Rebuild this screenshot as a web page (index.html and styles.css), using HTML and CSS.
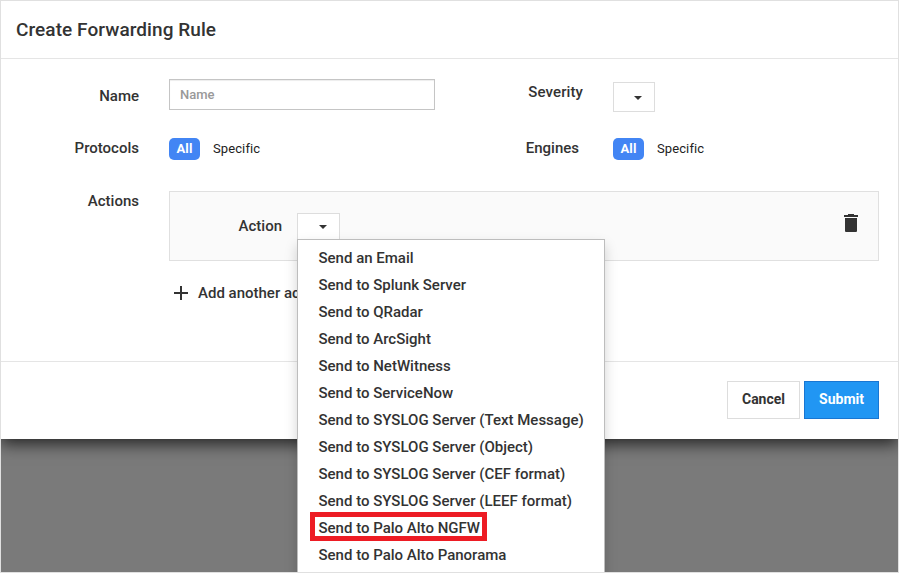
FILE: index.html
```html
<!DOCTYPE html>
<html lang="en">
<head>
<meta charset="utf-8">
<title>Create Forwarding Rule</title>
<link rel="stylesheet" href="styles.css">
</head>
<body>
<div class="page">
  <section class="modal">
    <header class="modal-header"><h1>Create Forwarding Rule</h1></header>
    <form class="modal-body">
      <div class="row row-name">
        <label class="label name-label" for="name">Name</label>
        <input class="input" id="name" type="text" placeholder="Name">
        <span class="label severity-label">Severity</span>
        <button class="select" type="button" aria-label="Severity"><span class="caret"></span></button>
      </div>
      <div class="row row-scope">
        <span class="label">Protocols</span>
        <div class="toggle"><span class="pill">All</span><span>Specific</span></div>
        <span class="label engines-label">Engines</span>
        <div class="toggle"><span class="pill">All</span><span>Specific</span></div>
      </div>
      <div class="row-actions">
        <span class="label actions-label">Actions</span>
        <div class="panel">
          <span class="label action-label">Action</span>
          <div class="dropdown">
            <button class="select" type="button" aria-label="Action"><span class="caret"></span></button>
            <ul class="menu">
              <li>Send an Email</li>
              <li>Send to Splunk Server</li>
              <li>Send to QRadar</li>
              <li>Send to ArcSight</li>
              <li>Send to NetWitness</li>
              <li>Send to ServiceNow</li>
              <li>Send to SYSLOG Server (Text Message)</li>
              <li>Send to SYSLOG Server (Object)</li>
              <li>Send to SYSLOG Server (CEF format)</li>
              <li>Send to SYSLOG Server (LEEF format)</li>
              <li class="marked">Send to Palo Alto NGFW</li>
              <li>Send to Palo Alto Panorama</li>
            </ul>
          </div>
          <svg class="trash" width="14" height="18" viewBox="0 0 14 18"><path d="M0 1h4V0h6v1h4v2H0zM1 4h12v13q0 1-1 1H2q-1 0-1-1z" fill="#333"/></svg>
        </div>
      </div>
      <div class="add">
        <svg width="14" height="14" viewBox="0 0 14 14"><path d="M6 0h2v6h6v2H8v6H6V8H0V6h6z" fill="#333"/></svg>
        <span>Add another action</span>
      </div>
    </form>
    <footer class="modal-footer">
      <button class="button" type="button">Cancel</button>
      <button class="button primary" type="button">Submit</button>
    </footer>
  </section>
</div>
</body>
</html>
```
FILE: styles.css
```css
*, *::after { box-sizing: border-box; }
body { margin: 0; font: 500 15px/20px Roboto, sans-serif; color: #333; }
.page { height: 573px; overflow: hidden; border: 1px solid #e0e0e0; background: #7a7a7a; }
.modal { height: 438px; background: #fff; box-shadow: 0 5px 15px rgba(0, 0, 0, .7); display: flex; flex-direction: column; }
.modal-header { height: 58px; padding: 16px 15px; border-bottom: 1px solid #e5e5e5; }
h1 { margin: 0; font-size: 19px; line-height: 25px; font-weight: 500; letter-spacing: .07px; }
.modal-body { flex: 1; padding: 20px 19px 0 0; }
.label { text-align: right; }
.row { display: grid; grid-template-columns: 138px 266px 148px auto; justify-content: start; align-items: start; }
.row > :nth-child(2) { margin-left: 30px; margin-right: -30px; }
.row > :nth-child(4) { margin-left: 60px; }
.row-name { height: 59px; }
.name-label { margin-top: 7px; }
.severity-label { margin: 3px -30px 0 0; letter-spacing: .1px; }
.input { width: 266px; height: 31px; padding: 0 10px; border: 1px solid #c5c5c5; box-shadow: inset 0 1px 1px rgba(0, 0, 0, .075); font: 500 13px Roboto, sans-serif; outline: none; }
.input::placeholder { color: #999; opacity: 1; }
.select { display: flex; align-items: center; width: 42px; height: 30px; padding: 1px 0 0 20px; border: 1px solid #ddd; background: #fff; }
.row-name .select { margin-top: 3px; }
.caret { border: 4px solid transparent; border-top-color: #333; border-bottom: 0; }
.row-scope { height: 53px; }
.engines-label { margin-right: -26px; }
.toggle { display: flex; align-items: center; gap: 13px; font-size: 13px; font-weight: 400; color: #222; line-height: 22px; letter-spacing: .1px; }
.pill { width: 31px; height: 22px; border-radius: 5px; background: #4285f4; color: #fff; font-weight: 700; text-align: center; }
.row-actions { display: flex; }
.actions-label { width: 138px; margin-right: 30px; }
.panel { flex: 1; height: 70px; display: flex; align-items: flex-start; padding: 21px 20px 0 0; border: 1px solid #e0e0e0; background: #fafafa; }
.action-label { width: 112px; margin: 3px 15px 0 0; }
.dropdown { position: relative; }
.dropdown .select { width: 43px; height: 28px; padding: 0 0 0 21px; }
.menu { position: absolute; z-index: 1; top: 26px; left: 0; width: 308px; height: 360px; margin: 0; padding: 5px 0; list-style: none; background: #fff; border: 1px solid #bdbdbd; box-shadow: 0 6px 12px rgba(0, 0, 0, .175); }
.menu li { height: 27px; padding-left: 20.5px; line-height: 27px; white-space: nowrap; }
.marked { position: relative; }
.marked::after { content: ""; position: absolute; left: 12px; top: -3px; width: 177px; height: 29px; border: 5px solid #ed1c24; }
.trash { margin: 1px 0 0 auto; }
.add { display: flex; align-items: center; gap: 10px; margin: 22px 0 0 173px; }
.modal-footer { height: 78px; border-top: 1px solid #e5e5e5; padding: 19px 19px 0 0; display: flex; justify-content: flex-end; gap: 4px; }
.button { width: 73px; height: 38px; padding: 0 0 2px; border: 1px solid #ddd; background: #fff; color: #333; font: 700 14px Roboto, sans-serif; }
.primary { width: 75px; border-color: #1976d2; background: #2196f3; color: #fff; }
```
